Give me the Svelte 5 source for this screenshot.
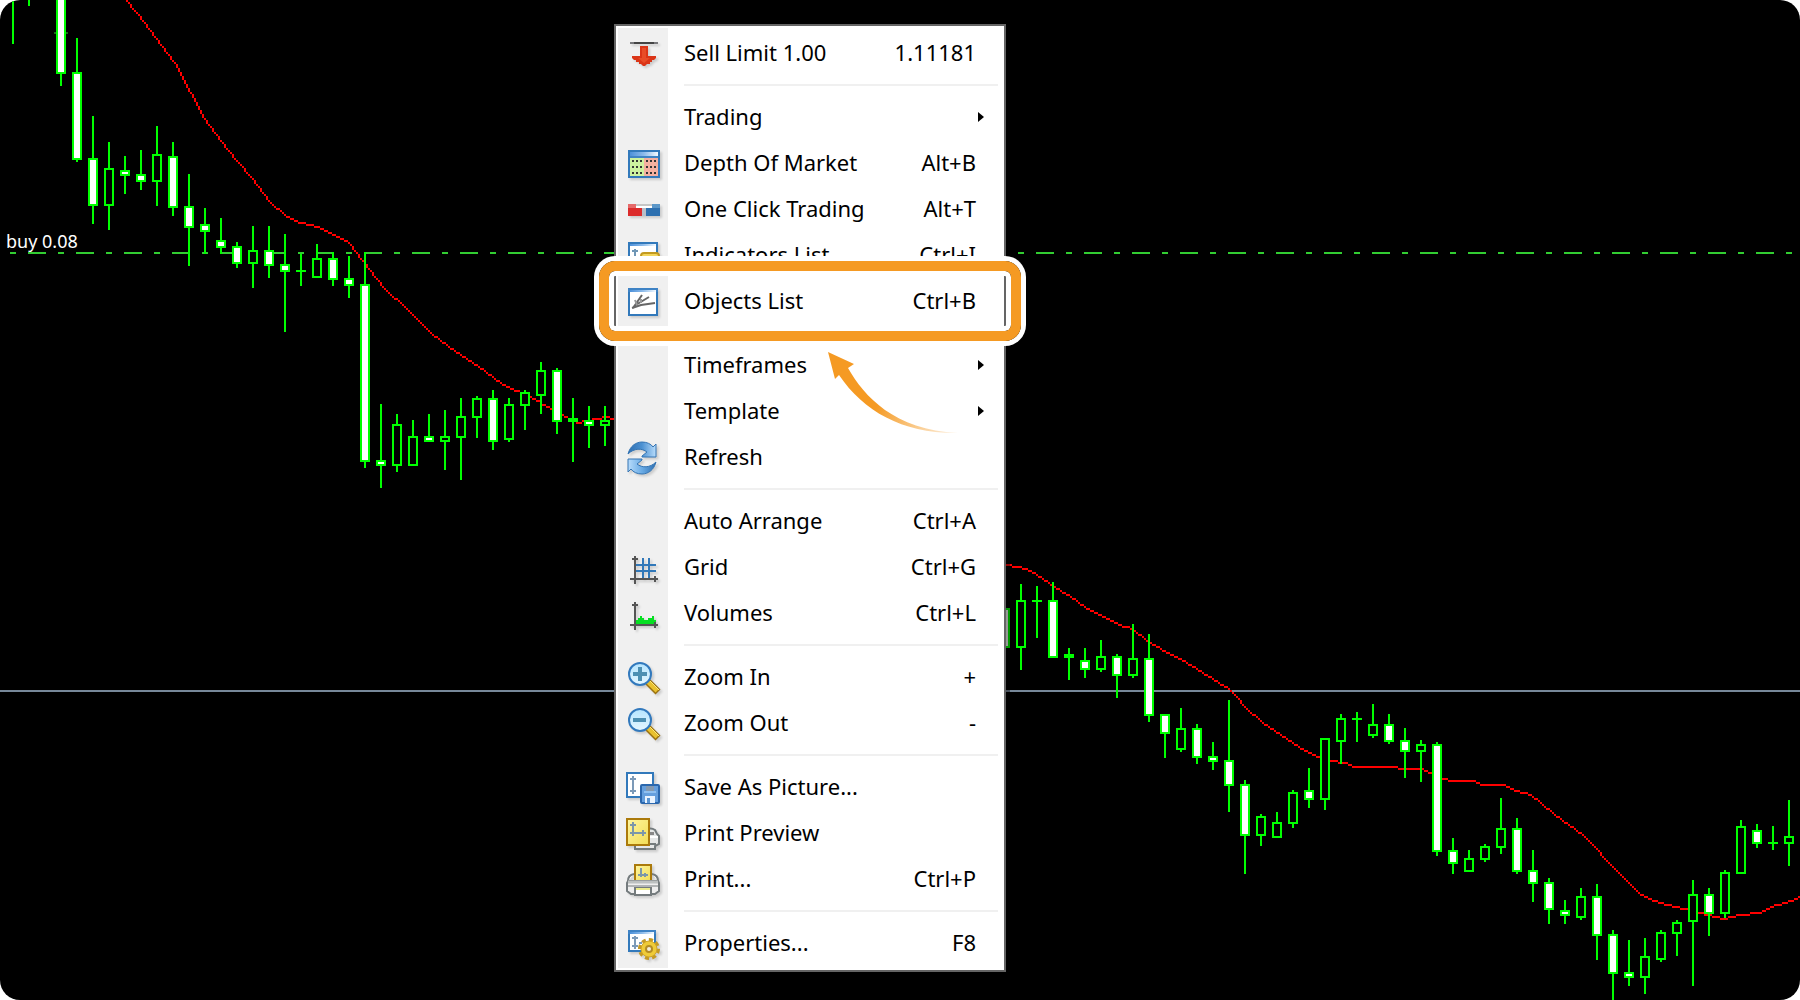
<script>
	// [wick x, high, low, body top, body bottom, kind]
	// kind: f = filled, h = hollow, s = solid line (open equals close)
	const candles = [
		[13, -10, 44, -10, -6, 's'],
		[29, -10, 6, -10, -6, 's'],
		[61, -10, 86, -10, 74, 'f'],
		[77, 38, 162, 72, 160, 'f'],
		[93, 116, 224, 158, 206, 'f'],
		[109, 142, 230, 168, 206, 'h'],
		[125, 156, 194, 170, 176, 'f'],
		[141, 150, 190, 174, 182, 'f'],
		[157, 126, 206, 154, 182, 'h'],
		[173, 142, 216, 156, 208, 'f'],
		[189, 174, 266, 206, 228, 'f'],
		[205, 208, 254, 224, 232, 'f'],
		[221, 218, 254, 240, 248, 'f'],
		[237, 242, 268, 246, 264, 'f'],
		[253, 226, 288, 250, 264, 'h'],
		[269, 226, 278, 250, 266, 'f'],
		[285, 234, 332, 264, 272, 'f'],
		[301, 254, 286, 270, 272, 's'],
		[317, 244, 278, 258, 278, 'h'],
		[333, 252, 286, 258, 280, 'f'],
		[349, 256, 298, 278, 286, 'f'],
		[365, 252, 468, 284, 462, 'f'],
		[381, 404, 488, 460, 466, 'f'],
		[397, 414, 472, 424, 466, 'h'],
		[413, 420, 466, 436, 466, 'h'],
		[429, 414, 442, 436, 442, 'f'],
		[445, 410, 470, 436, 442, 'h'],
		[461, 398, 480, 416, 438, 'h'],
		[477, 396, 438, 398, 418, 'h'],
		[493, 390, 450, 398, 442, 'f'],
		[509, 398, 442, 404, 440, 'h'],
		[525, 390, 430, 392, 406, 'h'],
		[541, 362, 414, 370, 396, 'h'],
		[557, 368, 434, 370, 422, 'f'],
		[573, 398, 462, 418, 422, 's'],
		[589, 406, 448, 420, 426, 'f'],
		[605, 406, 446, 420, 426, 'h'],
		[1005, 608, 648, 608, 648, 'f'],
		[1021, 584, 670, 600, 648, 'h'],
		[1037, 586, 638, 600, 602, 's'],
		[1053, 582, 658, 600, 658, 'f'],
		[1069, 648, 680, 654, 658, 's'],
		[1085, 648, 678, 660, 670, 'f'],
		[1101, 640, 672, 656, 670, 'h'],
		[1117, 654, 698, 656, 676, 'f'],
		[1133, 624, 678, 658, 676, 'h'],
		[1149, 634, 722, 658, 716, 'f'],
		[1165, 714, 758, 714, 734, 'f'],
		[1181, 708, 752, 728, 750, 'h'],
		[1197, 724, 764, 728, 758, 'f'],
		[1213, 742, 770, 756, 762, 'f'],
		[1229, 700, 812, 760, 786, 'f'],
		[1245, 780, 874, 784, 836, 'f'],
		[1261, 814, 846, 816, 836, 'h'],
		[1277, 812, 838, 822, 838, 'h'],
		[1293, 790, 828, 792, 824, 'h'],
		[1309, 768, 808, 790, 800, 'f'],
		[1325, 738, 810, 738, 800, 'h'],
		[1341, 714, 764, 718, 742, 'h'],
		[1357, 712, 742, 718, 720, 's'],
		[1373, 704, 738, 724, 736, 'h'],
		[1389, 714, 744, 724, 742, 'f'],
		[1405, 728, 778, 740, 752, 'f'],
		[1421, 740, 782, 744, 752, 'h'],
		[1437, 742, 856, 744, 852, 'f'],
		[1453, 838, 874, 850, 864, 'f'],
		[1469, 850, 872, 858, 872, 'h'],
		[1485, 844, 862, 846, 860, 'h'],
		[1501, 798, 854, 828, 848, 'h'],
		[1517, 818, 874, 828, 872, 'f'],
		[1533, 850, 902, 870, 884, 'f'],
		[1549, 878, 924, 882, 910, 'f'],
		[1565, 900, 924, 910, 916, 'f'],
		[1581, 888, 920, 896, 918, 'h'],
		[1597, 884, 960, 896, 936, 'f'],
		[1613, 930, 1000, 934, 974, 'f'],
		[1629, 940, 986, 972, 978, 'f'],
		[1645, 938, 994, 956, 978, 'h'],
		[1661, 930, 962, 932, 960, 'h'],
		[1677, 920, 956, 922, 934, 'h'],
		[1693, 880, 986, 894, 922, 'h'],
		[1709, 888, 936, 894, 914, 'f'],
		[1725, 870, 918, 872, 914, 'h'],
		[1741, 820, 874, 826, 874, 'h'],
		[1757, 824, 848, 830, 844, 'f'],
		[1773, 826, 850, 842, 844, 's'],
		[1789, 800, 866, 836, 844, 'h'],
	]

	const average = [
		[
			[126, 0], [144, 22], [160, 44], [174, 62], [190, 92], [204, 118], [220, 140], [236, 160],
			[252, 178], [268, 200], [284, 214], [300, 222], [318, 226], [334, 234], [348, 242], [362, 260],
			[374, 276], [384, 288], [406, 308], [430, 332], [454, 350], [478, 366], [500, 382], [516, 390],
			[534, 398], [550, 408], [566, 416], [576, 422], [584, 420], [596, 418], [604, 416], [614, 418],
		],
		[
			[1006, 564], [1018, 566], [1030, 570], [1042, 578], [1054, 586], [1070, 596], [1084, 606],
			[1104, 616], [1118, 624], [1132, 628], [1144, 638], [1160, 648], [1180, 658], [1196, 668],
			[1212, 678], [1228, 688], [1236, 696], [1244, 706], [1262, 722], [1280, 734], [1298, 746],
			[1318, 756], [1332, 760], [1344, 762], [1354, 766], [1396, 766], [1400, 768], [1422, 768],
			[1434, 774], [1450, 780], [1472, 780], [1482, 784], [1502, 784], [1516, 790], [1530, 794],
			[1540, 802], [1552, 812], [1568, 824], [1582, 834], [1594, 846], [1604, 858], [1622, 876],
			[1636, 890], [1644, 896], [1660, 902], [1676, 906], [1700, 912], [1714, 916],
			[1724, 918], [1738, 914], [1758, 912], [1770, 906], [1784, 902], [1800, 896],
		],
	]

	// steps a polyline through 2px cells, without smoothing
	function cells(points) {
		let d = ''
		for (let i = 1; i < points.length; i++) {
			const [x0, y0] = points[i - 1]
			const [x1, y1] = points[i]
			const n = Math.max(Math.abs(x1 - x0), Math.abs(y1 - y0)) / 2
			for (let k = 0; k < n; k++) {
				const x = 2 * Math.round((x0 + ((x1 - x0) * k) / n) / 2)
				const y = 2 * Math.round((y0 + ((y1 - y0) * k) / n) / 2)
				d += `M${x} ${y}h2v2h-2z`
			}
		}
		return d
	}

	const groups = [
		[{ label: 'Sell Limit 1.00', keys: '1.11181', icon: 'sell' }],
		[
			{ label: 'Trading', submenu: true },
			{ label: 'Depth Of Market', keys: 'Alt+B', icon: 'depth' },
			{ label: 'One Click Trading', keys: 'Alt+T', icon: 'oneclick' },
			{ label: 'Indicators List', keys: 'Ctrl+I', icon: 'indicators' },
			{ label: 'Objects List', keys: 'Ctrl+B', icon: 'objects', marked: true },
		],
		[
			{ label: 'Timeframes', submenu: true },
			{ label: 'Template', submenu: true },
			{ label: 'Refresh', icon: 'refresh' },
		],
		[
			{ label: 'Auto Arrange', keys: 'Ctrl+A' },
			{ label: 'Grid', keys: 'Ctrl+G', icon: 'grid' },
			{ label: 'Volumes', keys: 'Ctrl+L', icon: 'volumes' },
		],
		[
			{ label: 'Zoom In', keys: '+', icon: 'zoomin' },
			{ label: 'Zoom Out', keys: '-', icon: 'zoomout' },
		],
		[
			{ label: 'Save As Picture...', icon: 'save' },
			{ label: 'Print Preview', icon: 'preview' },
			{ label: 'Print...', keys: 'Ctrl+P', icon: 'print' },
		],
		[{ label: 'Properties...', keys: 'F8', icon: 'properties' }],
	]
</script>

{#snippet icon(name)}
	<svg class="icon" viewBox="0 0 50 46" aria-hidden="true">
		{#if name === 'sell'}
			<path d="M12 12h28v2H12z" fill="#77777a" />
			<path d="M16 12h20v2H16z" fill="#444" />
			<path d="M22 16h8v10h8v2l-2 2h-2v2h-2v2h-3l-2 2h-2l-2-2h-2v-2h-3v-2h-2l-2-2v-2h8z" fill="#db3517" />
			<path d="M24 18h4v10h4l-6 5-6-5h4z" fill="#e84c27" />
		{:else if name === 'depth'}
			<rect x="11" y="11" width="30" height="26" fill="#cdf29f" stroke="#3279bb" stroke-width="2" />
			<rect x="26" y="18" width="14" height="18" fill="#f5b0a0" />
			<rect x="12" y="12" width="28" height="6" fill="url(#bar)" />
			<rect x="12" y="16" width="28" height="2" fill="#4084c4" />
			<path d="M14 21h10M14 27h10M14 33h10M28 21h10M28 27h10M28 33h10" stroke="#333" stroke-width="2" stroke-dasharray="2 2" />
		{:else if name === 'oneclick'}
			<path d="M18 18h16v4H18z" fill="#fff" />
			<path d="M18 18h16v2H18z" fill="#c6c6c6" />
			<path d="M10 18h8v4h6v8H10z" fill="#dc2b2b" />
			<path d="M10 18h8v4h-8z" fill="#e56a6a" />
			<path d="M24 22h4v8h-4z" fill="#b8bfc9" />
			<path d="M34 18h8v12H28v-8h6z" fill="#2d70b0" />
			<path d="M34 18h8v4h-8z" fill="#5c97c8" />
		{:else if name === 'indicators'}
			<rect x="11" y="11" width="28" height="26" fill="#fff" stroke="#3279bb" stroke-width="2" />
			<rect x="12" y="12" width="26" height="2" fill="url(#bar)" />
			<path d="M17 17v14M14 19h6" stroke="#6f96b5" stroke-width="2" />
			<rect x="23" y="21" width="18" height="16" rx="3" fill="#f3d65c" stroke="#c39a1f" stroke-width="2" />
		{:else if name === 'objects'}
			<rect x="11" y="11" width="28" height="26" fill="#fff" stroke="#3279bb" stroke-width="2" />
			<rect x="10" y="10" width="30" height="4" fill="#3f83c5" />
			<rect x="12" y="12" width="26" height="2" fill="url(#bar)" />
			<g fill="none" stroke="#666">
				<path d="M15 30 24 17M16 28l15-9" stroke-width="2" />
				<path d="M14 30l9-3 14-2" stroke-width="2" />
				<path d="M17 22l2 5M23 21v4" stroke="#999" stroke-width="2" />
			</g>
		{:else if name === 'refresh'}
			<path d="M10 20c2-8 8-12 14-12 5 0 9 2 11 5l3-3v13H24v-1l5-4c-5-4-13-4-19 2z" fill="url(#blue)" stroke="#3474b3" />
			<path d="M38 28c-2 8-8 12-14 12-5 0-9-2-11-5l-3 3V25h14v1l-5 4c5 4 13 4 19-2z" fill="url(#blue2)" stroke="#3474b3" />
		{:else if name === 'grid'}
			<path d="M25 14v20M31 14v20M18 21h20M18 27h20" stroke="#3178b9" stroke-width="2" />
			<path d="M17 12v28M12 35h28M14 15h6M37 32v6" stroke="#555" stroke-width="2" />
		{:else if name === 'volumes'}
			<path d="M18 34v-4h2v-2h2v-2h2v2h2v2h4v-2h4v-2h2v4h2v4z" fill="#06df22" />
			<path d="M17 12v28M12 35h28M14 15h6M37 32v6" stroke="#555" stroke-width="2" />
		{:else if name === 'zoomin' || name === 'zoomout'}
			<path d="m30 28 10 10" stroke="#9b7210" stroke-width="7" />
			<path d="m30 28 9 9" stroke="#e9c12f" stroke-width="4" />
			<path d="m32 27 9 9" stroke="#fbe87c" stroke-width="1" />
			<circle cx="22" cy="20" r="11" fill="url(#lens)" stroke="#3279bd" stroke-width="2" />
			<path d={name === 'zoomin' ? 'M15 20h14M22 13v14' : 'M15 20h13'} stroke="#4d90b3" stroke-width="4" />
		{:else if name === 'save'}
			<rect x="9" y="9" width="26" height="24" fill="#fff" stroke="#3279bb" stroke-width="2" />
			<path d="M15 12v18M12 15h6M12 27h6" stroke="#7c9ab8" stroke-width="2" />
			<rect x="23" y="21" width="18" height="18" rx="1" fill="#659fdd" stroke="#2b67ad" stroke-width="2" />
			<rect x="28" y="22" width="8" height="6" fill="#8499b0" />
			<path d="M26 28h12" stroke="#8fc0f0" stroke-width="2" />
			<rect x="27" y="32" width="10" height="7" fill="#eaf4ff" />
			<path d="M29 34h3v5h-3z" fill="#5a94d2" />
		{:else if name === 'preview'}
			<path d="M26 20q7-3 11 0l2 4 2 2v8l-4 2v3H17v-5" fill="#e5e7e7" stroke="#747b7d" stroke-width="2" />
			<path d="M32 22h4v3h-4z" fill="#888" />
			<path d="M32 27h8" stroke="#fff" stroke-width="2" />
			<path d="M30 34h8" stroke="#747b7d" stroke-width="2" />
			<rect x="9" y="9" width="22" height="26" fill="url(#page)" stroke="#ab7a0b" stroke-width="2" />
			<path d="M15 12v14M12 15h6M12 23h16M25 20v6" stroke="#7c97a9" stroke-width="2" />
		{:else if name === 'print'}
			<path d="M16 18q-6 1-6 7M34 18q6 1 6 7" fill="#fff" stroke="#747b7d" stroke-width="2" />
			<rect x="17" y="9" width="16" height="17" fill="url(#page)" stroke="#ab7a0b" stroke-width="2" />
			<path d="M23 12v9M20 19h10M27 17v4" stroke="#7c97a9" stroke-width="2" />
			<path d="M10 25h30l1 2v8l-4 3H13l-4-3v-8z" fill="#eee" stroke="#747b7d" stroke-width="2" />
			<path d="M10 26h30" stroke="#bcc0c0" stroke-width="3" />
			<path d="M10 30h30" stroke="#747b7d" stroke-width="1" />
			<rect x="17" y="32" width="16" height="7" fill="#fff" stroke="#747b7d" stroke-width="2" />
			<path d="M18 33h14" stroke="#ecec8a" stroke-width="2" />
		{:else if name === 'properties'}
			<rect x="11" y="11" width="26" height="20" fill="#fff" stroke="#3279bb" stroke-width="2" />
			<rect x="10" y="10" width="28" height="4" fill="#3f83c5" />
			<rect x="12" y="12" width="24" height="2" fill="url(#bar)" />
			<path d="M17 16v13M14 18h6M14 26h6M21 23h3" stroke="#7c9ab8" stroke-width="2" />
			<circle cx="31" cy="29" r="9" fill="none" stroke="#c49a25" stroke-width="4" stroke-dasharray="4 3" />
			<circle cx="31" cy="29" r="8" fill="#efcb38" stroke="#cda328" stroke-width="1" />
			<circle cx="31" cy="29" r="3" fill="#f3edda" stroke="#b38c25" stroke-width="2" />
		{/if}
	</svg>
{/snippet}

<main>
	<svg class="chart" viewBox="0 0 1800 1000" role="img" aria-label="Candlestick chart">
		<defs>
			<linearGradient id="bar"><stop stop-color="#4d91da" /><stop offset="0.5" stop-color="#8dbbea" /><stop offset="1" stop-color="#f4faff" /></linearGradient>
			<linearGradient id="blue"><stop stop-color="#2e6eb0" /><stop offset="0.5" stop-color="#4c91d2" /><stop offset="1" stop-color="#b8dcfb" /></linearGradient>
			<linearGradient id="blue2"><stop stop-color="#b8dcfb" /><stop offset="0.5" stop-color="#6aabe5" /><stop offset="1" stop-color="#2e6eb0" /></linearGradient>
			<linearGradient id="lens" x2="0" y2="1"><stop stop-color="#b5e5ff" /><stop offset="1" stop-color="#e6f7ff" /></linearGradient>
			<linearGradient id="page" x2="1" y2="1"><stop stop-color="#fff6a0" /><stop offset="1" stop-color="#f1dc55" /></linearGradient>
		</defs>
		<g shape-rendering="crispEdges">
			<path class="price" d="M0 691H1800" />
			<path class="order" d="M10 253H1800" />
			<path class="mark" d="M54 33H68" />
			{#each average as points}
				<path class="average" d={cells(points)} />
			{/each}
			{#each candles as [x, high, low, top, bottom, kind]}
				<path class="wick" d={`M${x} ${high}V${low}`} />
				{#if kind === 's'}
					<rect class="flat" x={x - 5} y={top} width="10" height={bottom - top} />
				{:else}
					<rect class="body" class:filled={kind === 'f'} x={x - 4} y={top + 1} width="8" height={bottom - top - 2} />
				{/if}
			{/each}
		</g>
		<text x="6" y="248">buy 0.08</text>
	</svg>

	<ul class="menu" role="menu">
		{#each groups as group, i}
			{#if i > 0}
				<li class="separator" role="separator"></li>
			{/if}
			{#each group as item}
				<li class="row" role="none">
					<button type="button" role="menuitem">
						{@render icon(item.icon)}
						<span class="label">{item.label}</span>
						{#if item.submenu}
							<span class="submenu"></span>
						{:else if item.keys}
							<span class="keys">{item.keys}</span>
						{/if}
					</button>
					{#if item.marked}
						<div class="marker"></div>
					{/if}
				</li>
			{/each}
		{/each}
	</ul>

	<svg class="pointer" viewBox="0 0 134 84" aria-hidden="true">
		<defs>
			<linearGradient id="fade" gradientUnits="userSpaceOnUse" x1="10" y1="10" x2="130" y2="82">
				<stop offset="0.4" stop-color="#f59a23" />
				<stop offset="1" stop-color="#f59a23" stop-opacity="0.1" />
			</linearGradient>
		</defs>
		<path d="M0 0 26 12 20 16C36 44 66 78 130 81 76 82 36 60 11 23L7 27z" fill="url(#fade)" />
	</svg>
</main>

<style>
	:global(body) {
		margin: 0;
		background: #fff;
	}

	main {
		position: relative;
		min-height: 100vh;
		overflow: hidden;
		border-radius: 20px;
		background: #000;
		font-family: 'Noto Sans', 'Open Sans', sans-serif;
	}

	/* chart */
	.chart {
		display: block;
		width: 100%;
	}

	.chart text {
		fill: #fff;
		font-size: 18px;
	}

	.price {
		stroke: #778899;
		stroke-width: 2;
	}

	.order {
		stroke: #32cd32;
		stroke-width: 2;
		stroke-dasharray: 6 12 18 12;
	}

	.mark {
		stroke: #196619;
		stroke-width: 2;
	}

	.average {
		fill: #f00;
	}

	.wick {
		stroke: #0f0;
		stroke-width: 2;
	}

	.flat {
		fill: #0f0;
	}

	.body {
		fill: #000;
		stroke: #0f0;
		stroke-width: 2;
	}

	.filled {
		fill: #fff;
	}

	/* context menu, opened over the chart */
	.menu {
		position: absolute;
		top: 24px;
		left: 614px;
		box-sizing: border-box;
		width: 392px;
		margin: 0;
		padding: 4px 0;
		list-style: none;
		border: 2px solid #656565;
		background: linear-gradient(#f0f0f0, #f0f0f0) 2px 2px / 50px calc(100% - 4px) no-repeat #fff;
		box-shadow: 4px 0 0 rgba(0, 0, 0, 0.4);
	}

	.row {
		position: relative;
	}

	.row button {
		display: flex;
		align-items: center;
		gap: 16px;
		width: 100%;
		height: 46px;
		padding: 0 28px 0 2px;
		border: 0;
		background: none;
		color: #000;
		font-family: inherit;
		font-size: 22px;
		line-height: 30px;
		text-align: left;
		white-space: nowrap;
	}

	.icon {
		flex: none;
		width: 50px;
		height: 46px;
		filter: drop-shadow(2px 2px 1px rgba(0, 0, 0, 0.15));
	}

	.label {
		flex: 1;
	}

	.label,
	.keys {
		padding-bottom: 2px;
	}

	.submenu {
		margin-right: -8px;
		border: solid transparent;
		border-width: 5px 0 5px 6px;
		border-left-color: #000;
	}

	.separator {
		height: 2px;
		margin: 8px 6px 8px 68px;
		background: #f0f0f0;
	}

	.marker {
		position: absolute;
		inset: -17px;
		z-index: 1;
		border: 10px solid #f59a23;
		border-radius: 16px;
		box-shadow: 0 0 0 5px #fff, inset 0 0 0 5px #fff;
		pointer-events: none;
	}

	.pointer {
		position: absolute;
		top: 352px;
		left: 828px;
		width: 134px;
		height: 84px;
		pointer-events: none;
	}
</style>
